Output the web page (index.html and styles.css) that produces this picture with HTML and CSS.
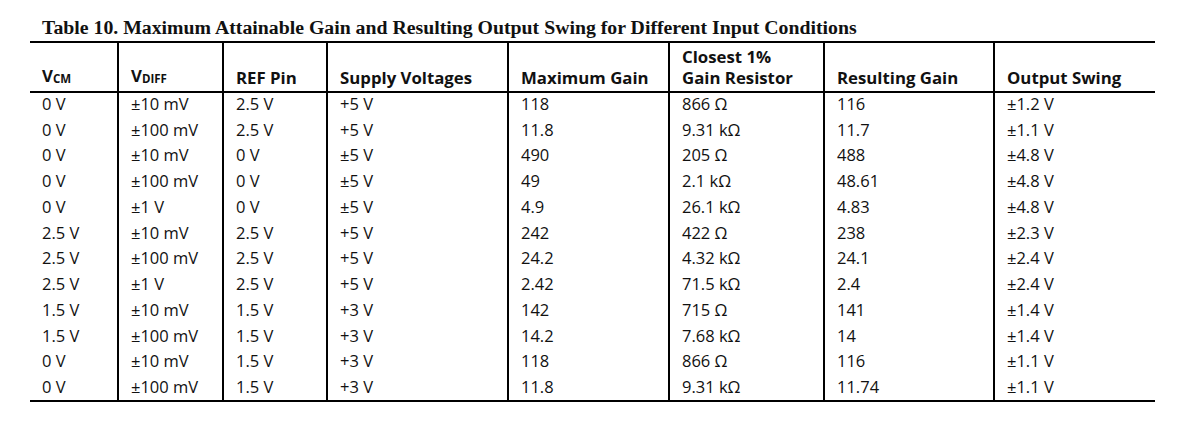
FILE: index.html
```html
<!DOCTYPE html>
<html>
<head>
<meta charset="utf-8">
<link rel="stylesheet" href="styles.css">
</head>
<body>
<div class="wrap">
  <div class="title">Table 10. Maximum Attainable Gain and Resulting Output Swing for Different Input Conditions</div>
  <table class="spec">
    <colgroup>
      <col class="c1"><col class="c2"><col class="c3"><col class="c4"><col class="c5"><col class="c6"><col class="c7"><col class="c8">
    </colgroup>
    <thead>
      <tr>
        <th>V<span class="sub">CM</span></th>
        <th>V<span class="sub">DIFF</span></th>
        <th>REF Pin</th>
        <th>Supply Voltages</th>
        <th>Maximum Gain</th>
        <th>Closest 1%<br>Gain Resistor</th>
        <th>Resulting Gain</th>
        <th>Output Swing</th>
      </tr>
    </thead>
    <tbody>
      <tr><td>0 V</td><td>±10 mV</td><td>2.5 V</td><td>+5 V</td><td>118</td><td>866 Ω</td><td>116</td><td>±1.2 V</td></tr>
      <tr><td>0 V</td><td>±100 mV</td><td>2.5 V</td><td>+5 V</td><td>11.8</td><td>9.31 kΩ</td><td>11.7</td><td>±1.1 V</td></tr>
      <tr><td>0 V</td><td>±10 mV</td><td>0 V</td><td>±5 V</td><td>490</td><td>205 Ω</td><td>488</td><td>±4.8 V</td></tr>
      <tr><td>0 V</td><td>±100 mV</td><td>0 V</td><td>±5 V</td><td>49</td><td>2.1 kΩ</td><td>48.61</td><td>±4.8 V</td></tr>
      <tr><td>0 V</td><td>±1 V</td><td>0 V</td><td>±5 V</td><td>4.9</td><td>26.1 kΩ</td><td>4.83</td><td>±4.8 V</td></tr>
      <tr><td>2.5 V</td><td>±10 mV</td><td>2.5 V</td><td>+5 V</td><td>242</td><td>422 Ω</td><td>238</td><td>±2.3 V</td></tr>
      <tr><td>2.5 V</td><td>±100 mV</td><td>2.5 V</td><td>+5 V</td><td>24.2</td><td>4.32 kΩ</td><td>24.1</td><td>±2.4 V</td></tr>
      <tr><td>2.5 V</td><td>±1 V</td><td>2.5 V</td><td>+5 V</td><td>2.42</td><td>71.5 kΩ</td><td>2.4</td><td>±2.4 V</td></tr>
      <tr><td>1.5 V</td><td>±10 mV</td><td>1.5 V</td><td>+3 V</td><td>142</td><td>715 Ω</td><td>141</td><td>±1.4 V</td></tr>
      <tr><td>1.5 V</td><td>±100 mV</td><td>1.5 V</td><td>+3 V</td><td>14.2</td><td>7.68 kΩ</td><td>14</td><td>±1.4 V</td></tr>
      <tr><td>0 V</td><td>±10 mV</td><td>1.5 V</td><td>+3 V</td><td>118</td><td>866 Ω</td><td>116</td><td>±1.1 V</td></tr>
      <tr><td>0 V</td><td>±100 mV</td><td>1.5 V</td><td>+3 V</td><td>11.8</td><td>9.31 kΩ</td><td>11.74</td><td>±1.1 V</td></tr>
    </tbody>
  </table>
</div>
</body>
</html>
```
FILE: styles.css
```css
html, body {
  margin: 0;
  padding: 0;
  background: #ffffff;
}
.wrap {
  padding: 16px 0 0 30px;
  width: 1125px;
}
.title {
  font-family: "Liberation Serif", "Times New Roman", serif;
  font-weight: bold;
  font-size: 19.8px;
  line-height: 22px;
  color: #111;
  padding-left: 12px;
  height: 25px;
  white-space: nowrap;
}
.spec {
  border-collapse: collapse;
  table-layout: fixed;
  width: 1125px;
  font-family: "Open Sans", "Noto Sans", sans-serif;
  font-size: 16.5px;
  color: #111;
  border-top: 2px solid #000;
  border-bottom: 2px solid #000;
}
.c1 { width: 88px; }
.c2 { width: 105px; }
.c3 { width: 104px; }
.c4 { width: 181px; }
.c5 { width: 161px; }
.c6 { width: 155px; }
.c7 { width: 170px; }
.c8 { width: 161px; }
.spec th, .spec td {
  text-align: left;
  padding: 0 0 0 12px;
  white-space: nowrap;
  border-left: 2px solid #000;
}
.spec th:first-child, .spec td:first-child {
  border-left: none;
}
.spec th {
  font-weight: bold;
  font-size: 16.8px;
  vertical-align: bottom;
  height: 45px;
  line-height: 21px;
  padding-bottom: 3px;
  border-bottom: 2px solid #000;
  letter-spacing: 0;
}
.spec td {
  height: 25.75px;
  line-height: 20px;
  vertical-align: middle;
  padding-bottom: 2px;
  box-sizing: border-box;
}
.sub {
  font-size: 11.5px;
  letter-spacing: 0;
  position: relative;
  top: 1px;
}
```
